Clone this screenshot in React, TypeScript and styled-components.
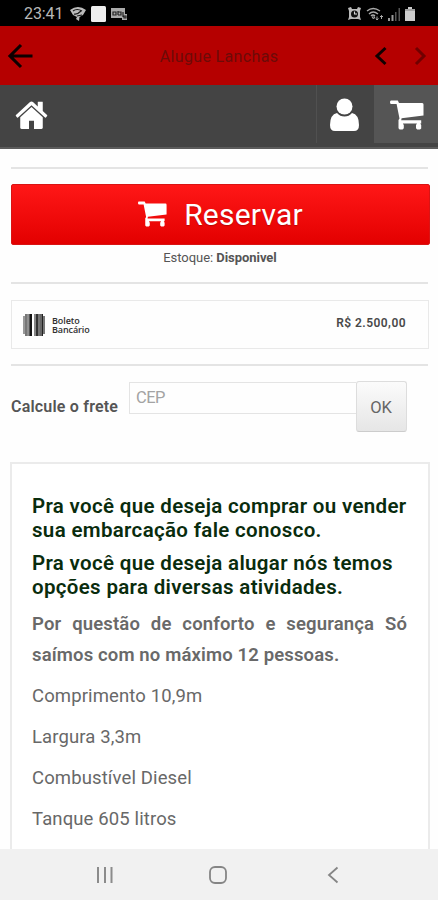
import React from "react";
import styled, { createGlobalStyle } from "styled-components";

const GlobalStyle = createGlobalStyle`
  * { box-sizing: border-box; }
  body { margin: 0; background: #fefefe; font-family: Roboto, "Liberation Sans", sans-serif; }
  h2, p { margin: 0; font-weight: inherit; }
  svg { display: block; flex: none; }
`;

const Screen = styled.div`
  width: 438px;
  height: 900px;
  display: flex;
  flex-direction: column;
  overflow: hidden;
  background: #fefefe;
`;

const StatusBar = styled.div`
  height: 26px;
  flex: none;
  display: flex;
  justify-content: space-between;
  align-items: center;
  padding: 2px 23px 0 24px;
  background: #000;
  color: #b8b8b8;
`;

const StatusGroup = styled.div<{ $gap: number }>`
  display: flex;
  align-items: center;
  gap: ${(p) => p.$gap}px;
`;

const Clock = styled.span`
  width: 40px;
  margin-right: 1px;
  font-size: 16px;
  line-height: 20px;
  letter-spacing: -0.1px;
  white-space: nowrap;
`;

const TitleBar = styled.header`
  height: 59px;
  flex: none;
  display: grid;
  grid-template-columns: 80px 1fr 80px;
  align-items: center;
  padding: 0 11px 0 7px;
  background: #b50000;
`;

const Title = styled.div`
  text-align: center;
  font-size: 16px;
  letter-spacing: 0.35px;
  padding: 1px 0 0 4px;
  color: #6c0b08;
`;

const Pager = styled.div`
  display: flex;
  justify-content: flex-end;
  gap: 25px;
`;

const NavBar = styled.nav`
  height: 64px;
  flex: none;
  display: flex;
  background: #444;
  border-bottom: 2px solid #5c5c5c;
`;

const NavItem = styled.div<{ $width?: number; $tone?: string; $line?: boolean; $pad: string }>`
  ${(p) => (p.$width ? `width: ${p.$width}px;` : "flex: 1;")}
  height: 58px;
  padding: ${(p) => p.$pad};
  background: ${(p) => p.$tone ?? "transparent"};
  border-left: ${(p) => (p.$line ? "1px solid #505050" : "0")};
`;

const Content = styled.main`
  flex: 1;
  min-height: 0;
  overflow: hidden;
  display: flex;
  flex-direction: column;
  padding: 18px 8px 0 11px;
`;

const Rule = styled.div`
  height: 2px;
  flex: none;
  margin-right: 2px;
  background: #e4e4e4;
`;

const ReserveButton = styled.button`
  flex: none;
  height: 61px;
  margin-top: 15px;
  padding: 0 0 1px;
  display: flex;
  align-items: center;
  justify-content: center;
  gap: 17px;
  border: 1px solid #d91414;
  border-radius: 2px;
  background: linear-gradient(#ff1717, #e30000);
  color: #fff;
  font: 400 30px Roboto, sans-serif;
  letter-spacing: 0.2px;
  text-shadow: 0 1px 1px rgba(90, 0, 0, 0.35);
`;

const Stock = styled.div`
  flex: none;
  height: 37px;
  padding-top: 4px;
  text-align: center;
  font-size: 13px;
  line-height: 17px;
  letter-spacing: -0.05px;
  padding-right: 1px;
  color: #555;
`;

const PaymentBox = styled.section`
  flex: none;
  display: flex;
  align-items: center;
  justify-content: space-between;
  height: 49px;
  margin: 16px 1px 15px 0;
  padding: 0 22px 0 11px;
  border: 1px solid #e9e9e9;
`;

const Method = styled.div`
  display: flex;
  align-items: center;
  gap: 7px;
  color: #303030;
`;

const MethodName = styled.span`
  display: flex;
  flex-direction: column;
  font: 600 9px/9px "Open Sans", sans-serif;
  letter-spacing: -0.1px;
`;

const Price = styled.span`
  padding-bottom: 3px;
  font-size: 12px;
  font-weight: 600;
  letter-spacing: 0.45px;
  color: #494949;
`;

const ShippingForm = styled.section`
  flex: none;
  display: flex;
  align-items: flex-start;
  height: 52px;
  margin-top: 15px;
`;

const ShippingLabel = styled.label`
  width: 118px;
  padding-top: 16px;
  font-size: 16px;
  line-height: 20px;
  font-weight: 600;
  letter-spacing: 0.2px;
  color: #555;
`;

const ZipField = styled.div`
  width: 227px;
  height: 32px;
  margin-top: 1px;
  padding: 0 6px;
  border: 1px solid #e4e4e4;
  border-right: 0;
  font-size: 16.5px;
  line-height: 30px;
  letter-spacing: -0.5px;
  color: #a3a3a3;
`;

const OkButton = styled.button`
  width: 51px;
  height: 51px;
  padding: 2px 1px 0 0;
  border: 1px solid #ddd;
  border-bottom-color: #ccc;
  border-radius: 3px;
  background: linear-gradient(#fbfbfb, #e6e6e6);
  font: 400 16.5px Roboto, sans-serif;
  color: #666;
`;

const Description = styled.article`
  flex: none;
  height: 410px;
  margin: 29px 0 0 -1px;
  width: 420px;
  padding: 31px 20px 0;
  border: 2px solid #ebebeb;
  background: #fff;
  white-space: nowrap;
`;

const Heading = styled.h2`
  margin-bottom: 10px;
  font-size: 20.5px;
  line-height: 23.5px;
  font-weight: 600;
  letter-spacing: 0.33px;
  color: #092c0d;
`;

const Notice = styled.p`
  font-size: 18.5px;
  line-height: 31px;
  font-weight: 600;
  letter-spacing: 0.14px;
  color: #696969;
  margin: 0 0 10px;
`;

const Justified = styled.span`
  display: block;
  width: 375px;
  text-align: justify;
  text-align-last: justify;
  white-space: normal;
`;

const Spec = styled.p`
  height: 41px;
  font-size: 18.5px;
  line-height: 31px;
  letter-spacing: 0.12px;
  color: #686868;
`;

const SystemBar = styled.footer`
  height: 51px;
  flex: none;
  display: grid;
  grid-template-columns: 113px 115px 1fr;
  align-items: center;
  padding: 0 0 0 96px;
  background: #f1f1f1;
`;

const Cart = ({ width, height }: { width: number; height: number }) => (
  <svg width={width} height={height} viewBox="0 0 34 30" preserveAspectRatio="none" fill="#fff">
    <path d="M1 0.6H7.8L9 3H32.2Q33.6 3 33.5 4.5V15.5L11.6 18.3L11.2 20.2H31.2V23.5H30.2L31.2 25V28.4L30 29.4H27.2L26 28.2V25L27 23.5H12.8L13.8 25V28.2L12.6 29.4H9.6L8.5 28.2V20L9.5 18.4L6.6 4H1Q0 4 0 2.3Q0 .6 1 .6Z" />
  </svg>
);

const Chevron = ({ right, color }: { right?: boolean; color: string }) => (
  <svg width="14" height="20" viewBox="0 0 14 20" fill="none" stroke={color} strokeWidth="3">
    <path d={right ? "M3 2L11 10L3 18" : "M11.5 2L3 10L11.5 18"} />
  </svg>
);

const barcodeBars = [
  [0, 3, "#999", 2], [2, 2, "#777", 0], [4, 2, "#909090", 0], [6, 1, "#555", 0], [7, 2, "#151515", 0],
  [11, 2, "#888", 0], [13, 2, "#333", 0], [15, 2, "#777", 0], [17, 2, "#666", 0], [19, 1, "#222", 0], [20, 2, "#777", 2],
] as const;

export default function App() {
  return (
    <>
      <GlobalStyle />
      <Screen>
        <StatusBar>
          <StatusGroup $gap={5}>
            <Clock>23:41</Clock>
            <svg width="16" height="16" viewBox="0 0 16 16">
              <path d="M0 4Q8-2 16 4L13 9L9.5 11L9 15L6 13L7 11L3 9Z" fill="#bbb" />
              <path d="M3 5Q7 2 12 5M4 8Q7 9 11 5M7 10L12 9" fill="none" stroke="#181818" strokeWidth="1.2" />
            </svg>
            <svg width="15" height="16" viewBox="0 0 15 16"><rect width="15" height="16" rx="1.5" fill="#eee" /></svg>
            <svg width="17" height="14" viewBox="0 0 17 14">
              <path d="M0 1H14V7H16V13H11V11H0Z" fill="#aaa" />
              <path d="M2 8V5H5V8ZM7 4V8M7 5H10V8H7M12 5V10M13 9H15V11H13Z" fill="none" stroke="#222" strokeWidth="1.2" />
            </svg>
          </StatusGroup>
          <StatusGroup $gap={5}>
            <svg width="13" height="14" viewBox="0 0 13 14">
              <path d="M0 1L3 0L4 2H9L10 0L13 1L12 4V10L13 13L10 12H3L0 13L1 10V4Z" fill="#bbb" />
              <circle cx="6.5" cy="7" r="3.5" fill="#111" />
              <path d="M6.5 4.5V7H9" fill="none" stroke="#ddd" strokeWidth="1.1" />
            </svg>
            <svg width="17" height="14" viewBox="0 0 17 14" fill="none" stroke="#aaa" strokeWidth="1.4">
              <path d="M1 4Q7-1 14 4M3 7Q7 3 12 7M5 9Q7 7 9 9" />
              <path d="M6 10H9L7.5 12ZM11 9.5V13M10 11.5L11 13L12.5 11.5M15.5 12V8.5M14 10L15.5 8.5L17 10" strokeWidth="1" />
            </svg>
            <svg width="12" height="14" viewBox="0 0 12 14">
              <path d="M0 11H2V14H0ZM3.5 8H5.5V14H3.5Z" fill="#999" />
              <path d="M7 5H8.5V14H7ZM10.5 1H12V14H10.5Z" fill="#555" />
            </svg>
            <svg width="10" height="14" viewBox="0 0 10 14">
              <path d="M3 0H7V2H10V14H0V2H3Z" fill="#ccc" />
              <path d="M0 3H10" stroke="#777" />
            </svg>
          </StatusGroup>
        </StatusBar>

        <TitleBar>
          <svg width="26" height="26" viewBox="0 0 26 26" fill="none" stroke="#0d0000" strokeWidth="3.1">
            <path d="M14 2L3 13L14 24M3 13H25.5" />
          </svg>
          <Title>Alugue Lanchas</Title>
          <Pager>
            <Chevron color="#120000" />
            <Chevron color="#700000" right />
          </Pager>
        </TitleBar>

        <NavBar>
          <NavItem $pad="15px 0 0 15px">
            <svg width="33" height="29" viewBox="52 180 1688 1356" preserveAspectRatio="none" fill="#fff">
              <path d="M1472 992v480q0 26-19 45t-45 19h-384v-384h-256v384h-384q-26 0-45-19t-19-45v-480q0-1 .5-3t.5-3l575-474 575 474q1 2 1 6zm223-69l-62 74q-8 9-21 11h-3q-13 0-21-7l-692-577-692 577q-12 8-24 7-13-2-21-11l-62-74q-8-10-7-23.5t11-21.5l719-599q32-26 76-26t76 26l244 204v-195q0-14 9-23t23-9h192q14 0 23 9t9 23v408l219 182q10 8 11 21.5t-7 23.5z" />
            </svg>
          </NavItem>
          <NavItem $width={58} $line $pad="13px 0 0 13px">
            <svg width="29" height="33" viewBox="0 0 29 33" fill="#fff">
              <path d="M7 15Q10 18.5 14.5 18.5T22 15Q29 16.5 29 27Q29 33 24 33H5Q0 33 0 27Q0 16.5 7 15Z" />
              <circle cx="14.5" cy="8.5" r="8" />
            </svg>
          </NavItem>
          <NavItem $width={64} $tone="#555" $pad="15px 0 0 16px"><Cart width={34} height={30} /></NavItem>
        </NavBar>

        <Content>
          <Rule />
          <ReserveButton><Cart width={29} height={26} />Reservar</ReserveButton>
          <Stock>Estoque: <b>Disponivel</b></Stock>
          <Rule />
          <PaymentBox>
            <Method>
              <svg width="22" height="22" viewBox="0 0 22 22">
                {barcodeBars.map(([x, w, fill, inset]) => (
                  <rect key={x} x={x} y={inset} width={w} height={22 - inset * 2} fill={fill} />
                ))}
              </svg>
              <MethodName>
                <span>Boleto</span>
                <span>Bancário</span>
              </MethodName>
            </Method>
            <Price>R$ 2.500,00</Price>
          </PaymentBox>
          <Rule />
          <ShippingForm>
            <ShippingLabel>Calcule o frete</ShippingLabel>
            <ZipField>CEP</ZipField>
            <OkButton>OK</OkButton>
          </ShippingForm>
          <Description>
            <Heading>Pra você que deseja comprar ou vender<br />sua embarcação fale conosco.</Heading>
            <Heading>Pra você que deseja alugar nós temos<br />opções para diversas atividades.</Heading>
            <Notice>
              <Justified>Por questão de conforto e segurança Só</Justified>
              saímos com no máximo 12 pessoas.
            </Notice>
            <Spec>Comprimento 10,9m</Spec>
            <Spec>Largura 3,3m</Spec>
            <Spec>Combustível Diesel</Spec>
            <Spec>Tanque 605 litros</Spec>
          </Description>
        </Content>

        <SystemBar>
          <svg width="18" height="18" viewBox="0 0 18 18" stroke="#8b8b8b" strokeWidth="2"><path d="M2 1V17M9 1V17M15.5 1V17" /></svg>
          <svg width="18" height="18" viewBox="0 0 18 18" fill="none" stroke="#858585" strokeWidth="1.8"><rect x="1" y="1" width="16" height="16" rx="5" /></svg>
          <svg width="18" height="18" viewBox="-3 0 18 18" fill="none" stroke="#858585" strokeWidth="1.8"><path d="M10.5 1.5L2 9L10.5 16.5" /></svg>
        </SystemBar>
      </Screen>
    </>
  );
}
